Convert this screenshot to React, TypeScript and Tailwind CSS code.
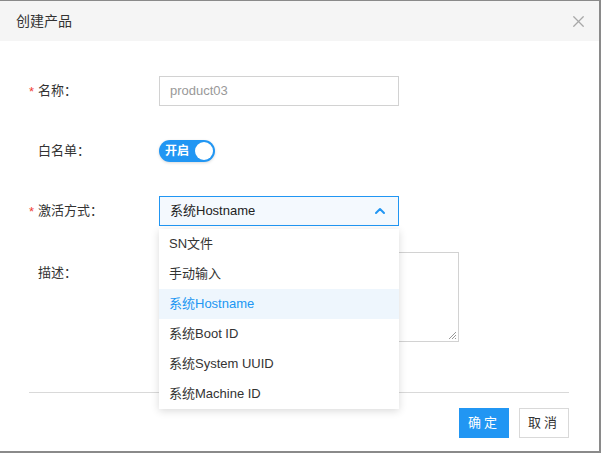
import { ChevronUp, X } from "lucide-react";

const font = { fontFamily: '"Liberation Sans", "Noto Sans CJK SC", sans-serif' };

const options = ["SN文件", "手动输入", "系统Hostname", "系统Boot ID", "系统System UUID", "系统Machine ID"];

function Label({ text, required }: { text: string; required?: boolean }) {
  return (
    <div className="relative w-[130px] shrink-0 pl-[9px] text-[13px] text-[#333]">
      {required && <span className="absolute left-0 top-[1px] text-[#f04134]">*</span>}
      {text}：
    </div>
  );
}

export default function App() {
  return (
    <div
      style={font}
      className="relative flex h-[453px] w-[601px] flex-col border-t border-r-2 border-b-2 border-[#8a8a8a] bg-white"
    >
      <div className="flex h-[40px] shrink-0 items-center justify-between bg-[#f5f5f5] pl-[16px] pr-[11px]">
        <span className="text-[14px] text-[#333]">创建产品</span>
        <X size={19} strokeWidth={1.6} className="text-[#a8a8a8]" />
      </div>

      <div className="flex flex-1 flex-col pl-[29px] pr-[30px] pt-[35px]">
        <div className="flex h-[30px] items-center">
          <Label text="名称" required />
          <div className="flex h-[30px] w-[240px] items-center border border-[#d2d2d2] px-[10px] text-[13px] text-[#999]">
            product03
          </div>
        </div>

        <div className="mt-[30px] flex h-[30px] items-center">
          <Label text="白名单" />
          <div className="flex h-[22px] w-[56px] items-center justify-between rounded-full bg-[#2196f3] pl-[6px] pr-[2px] shadow-[0_1px_3px_rgba(0,0,0,0.15)]">
            <span className="text-[12px] font-bold text-white">开启</span>
            <span className="h-[18px] w-[18px] rounded-full bg-white" />
          </div>
        </div>

        <div className="mt-[30px] flex h-[30px] items-center">
          <Label text="激活方式" required />
          <div className="flex h-[30px] w-[240px] items-center justify-between border border-[#2196f3] bg-[#f4f9fe] pl-[10px] pr-[10px] text-[13px] text-[#222]">
            <span>系统Hostname</span>
            <ChevronUp size={16} strokeWidth={3} className="text-[#2196f3]" />
          </div>
        </div>

        <div className="mt-[26px] flex items-start">
          <div className="pt-[11px]">
            <Label text="描述" />
          </div>
          <div className="relative h-[90px] w-[300px] border border-[#d2d2d2]">
            <svg className="absolute bottom-[1px] right-[1px]" width="10" height="10" viewBox="0 0 10 10">
              <path d="M9 2 L2 9 M9 5 L5 9 M9 8 L8 9" stroke="#999" strokeWidth="1" />
            </svg>
          </div>
        </div>

        <div className="mt-[50px] h-px bg-[#d9d9d9]" />

        <div className="mt-[15px] flex justify-end gap-[10px]">
          <button className="h-[30px] w-[50px] bg-[#2196f3] text-[13px] tracking-[3px] text-white">确定</button>
          <button className="h-[30px] w-[50px] border border-[#d9d9d9] bg-white text-[13px] tracking-[3px] text-[#333]">
            取消
          </button>
        </div>
      </div>

      <div className="absolute left-[159px] top-[228px] w-[240px] bg-white py-0 shadow-[0_2px_8px_rgba(0,0,0,0.15)]">
        {options.map((o) => (
          <div
            key={o}
            className={
              o === "系统Hostname"
                ? "flex h-[30px] items-center bg-[#eef6fd] px-[10px] text-[13px] text-[#2196f3]"
                : "flex h-[30px] items-center px-[10px] text-[13px] text-[#333]"
            }
          >
            {o}
          </div>
        ))}
      </div>
    </div>
  );
}
